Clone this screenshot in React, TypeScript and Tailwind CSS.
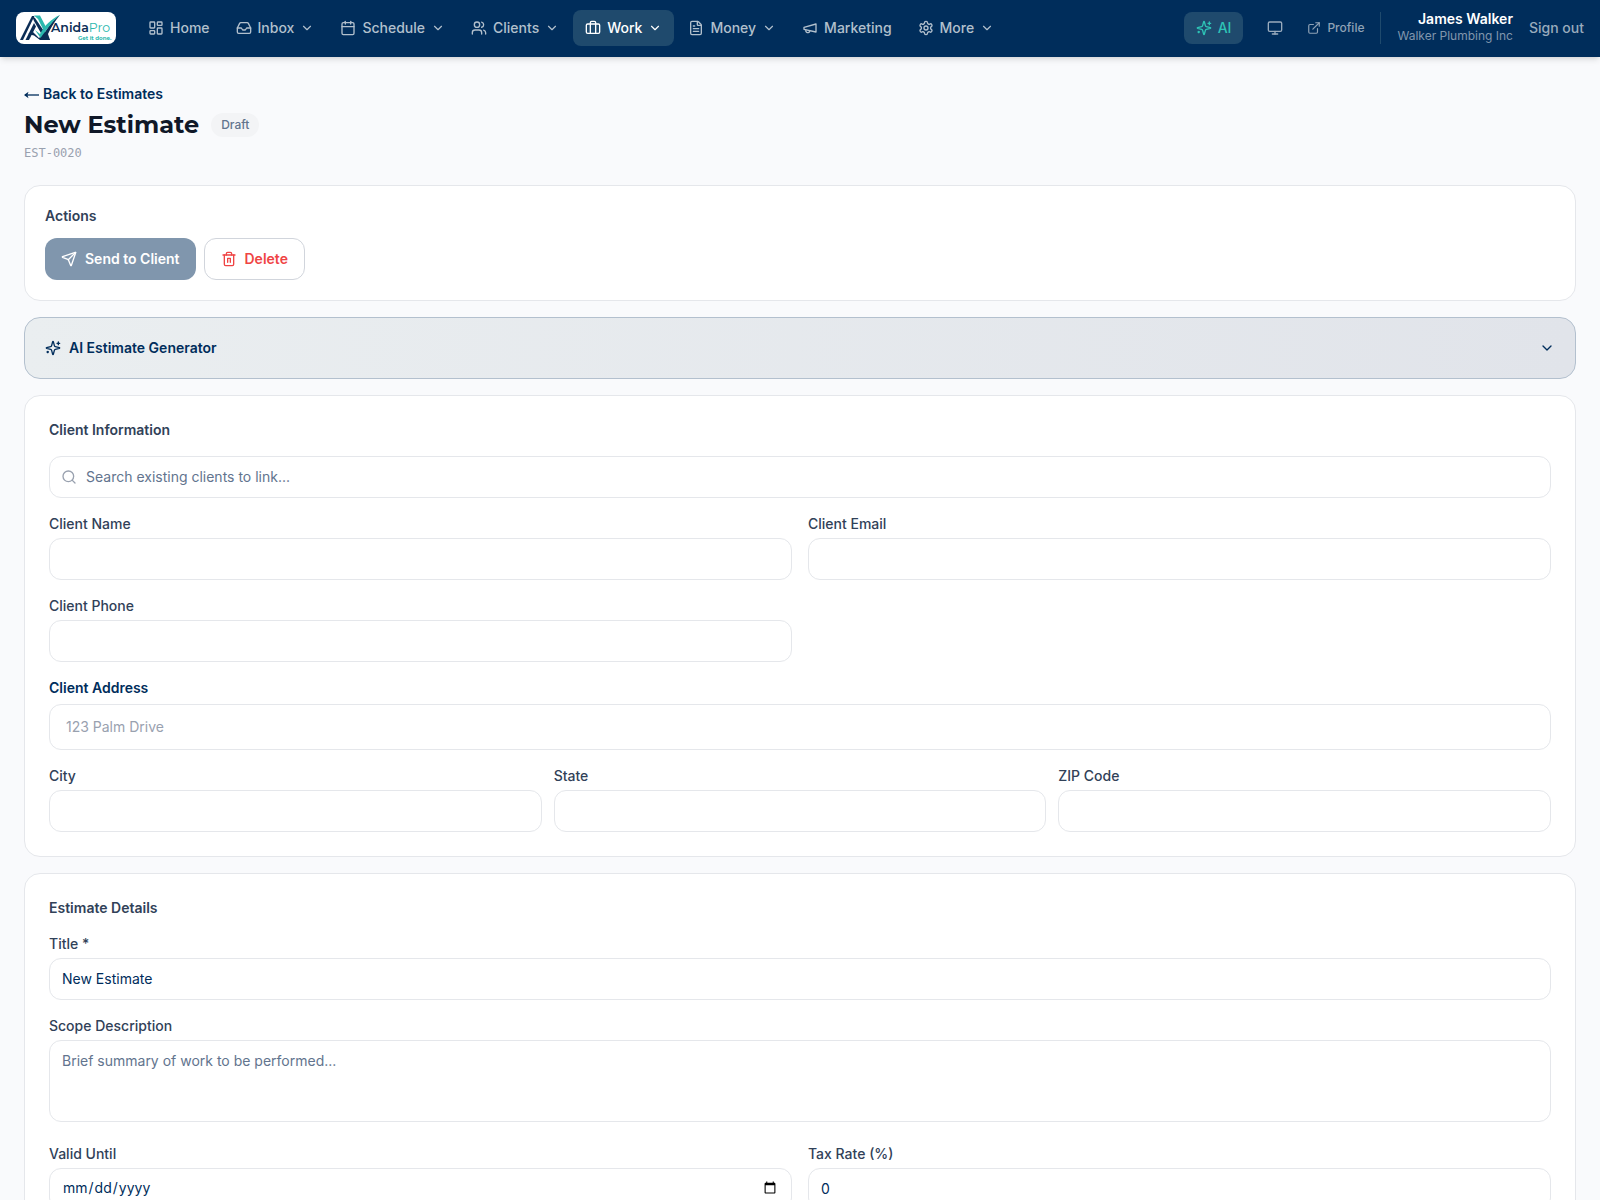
import { useState } from 'react';
import type { InputHTMLAttributes, ReactNode } from 'react';
import {
  Briefcase,
  Calendar,
  ChevronDown,
  ExternalLink,
  FileText,
  Inbox,
  LayoutDashboard,
  Monitor,
  Search,
  Send,
  Users,
} from 'lucide-react';

interface IconProps {
  size?: number;
  strokeWidth?: number;
}

interface NavItem {
  label: string;
  icon: (props: IconProps) => ReactNode;
  menu?: boolean;
  active?: boolean;
}

const StrokeIcon = ({ size = 16, strokeWidth = 2, children }: IconProps & { children: ReactNode }) => (
  <svg
    width={size}
    height={size}
    viewBox="0 0 24 24"
    fill="none"
    stroke="currentColor"
    strokeWidth={strokeWidth}
    strokeLinecap="round"
    strokeLinejoin="round"
    aria-hidden="true"
  >
    {children}
  </svg>
);

const MegaphoneIcon = (props: IconProps) => (
  <StrokeIcon {...props}>
    <path d="m3 11 18-5v12L3 14v-3z" />
    <path d="M11.6 16.8a3 3 0 1 1-5.8-1.6" />
  </StrokeIcon>
);

const GearIcon = (props: IconProps) => (
  <StrokeIcon {...props}>
    <path d="M12.22 2h-.44a2 2 0 0 0-2 2v.18a2 2 0 0 1-1 1.73l-.43.25a2 2 0 0 1-2 0l-.15-.08a2 2 0 0 0-2.73.73l-.22.38a2 2 0 0 0 .73 2.73l.15.1a2 2 0 0 1 1 1.72v.51a2 2 0 0 1-1 1.74l-.15.09a2 2 0 0 0-.73 2.73l.22.38a2 2 0 0 0 2.73.73l.15-.08a2 2 0 0 1 2 0l.43.25a2 2 0 0 1 1 1.73V20a2 2 0 0 0 2 2h.44a2 2 0 0 0 2-2v-.18a2 2 0 0 1 1-1.73l.43-.25a2 2 0 0 1 2 0l.15.08a2 2 0 0 0 2.73-.73l.22-.39a2 2 0 0 0-.73-2.73l-.15-.08a2 2 0 0 1-1-1.74v-.5a2 2 0 0 1 1-1.74l.15-.09a2 2 0 0 0 .73-2.73l-.22-.38a2 2 0 0 0-2.73-.73l-.15.08a2 2 0 0 1-2 0l-.43-.25a2 2 0 0 1-1-1.73V4a2 2 0 0 0-2-2z" />
    <circle cx="12" cy="12" r="3" />
  </StrokeIcon>
);

const SparklesIcon = (props: IconProps) => (
  <StrokeIcon {...props}>
    <path d="M9.937 15.5A2 2 0 0 0 8.5 14.063l-6.135-1.582a.5.5 0 0 1 0-.962L8.5 9.936A2 2 0 0 0 9.937 8.5l1.582-6.135a.5.5 0 0 1 .963 0L14.063 8.5A2 2 0 0 0 15.5 9.937l6.135 1.581a.5.5 0 0 1 0 .964L15.5 14.063a2 2 0 0 0-1.437 1.437l-1.582 6.135a.5.5 0 0 1-.963 0z" />
    <path d="M20 3v4" />
    <path d="M22 5h-4" />
    <path d="M4 17v2" />
    <path d="M5 18H3" />
  </StrokeIcon>
);

const TrashIcon = (props: IconProps) => (
  <StrokeIcon {...props}>
    <path d="M3 6h18" />
    <path d="M19 6v14c0 1-1 2-2 2H7c-1 0-2-1-2-2V6" />
    <path d="M8 6V4c0-1 1-2 2-2h4c1 0 2 1 2 2v2" />
    <path d="M10 17v-6h4v6" />
  </StrokeIcon>
);

const BackArrow = () => (
  <svg viewBox="0 0 15 8" className="mt-0.5 h-2 w-[15px]" aria-hidden="true">
    <path d="M1 4h14" stroke="currentColor" strokeWidth="1.3" />
    <path d="M0 4 L4.5 0.8 L3.4 4 L4.5 7.2 Z" fill="currentColor" />
  </svg>
);

const navItems: NavItem[] = [
  { label: 'Home', icon: (props) => <LayoutDashboard {...props} /> },
  { label: 'Inbox', icon: (props) => <Inbox {...props} />, menu: true },
  { label: 'Schedule', icon: (props) => <Calendar {...props} />, menu: true },
  { label: 'Clients', icon: (props) => <Users {...props} />, menu: true },
  { label: 'Work', icon: (props) => <Briefcase {...props} />, menu: true, active: true },
  { label: 'Money', icon: (props) => <FileText {...props} />, menu: true },
  { label: 'Marketing', icon: MegaphoneIcon },
  { label: 'More', icon: GearIcon, menu: true },
];

const Logo = () => (
  <a href="#home" aria-label="AnidaPro" className="block h-8 w-[100px] shrink-0 overflow-hidden rounded-lg bg-white">
    <svg viewBox="0 0 200 64" className="h-8 w-[100px]">
      <path d="M8 56 L32 8 L37 8 L14 56 Z" fill="#0b2d55" />
      <path d="M19 56 L36 22 L40 29 L26 56 Z" fill="#0b2d55" />
      <path d="M32 8 L38 12 L68 56 L58 56 L36 18 Z" fill="#0b2d55" />
      <path d="M36 7 L48 7 L61 32 L56 38 L44 14 Z" fill="#2bb8ae" />
      <path d="M24 44 L34 40 L46 52 L58 40 C68 24 77 14 88 6 C78 18 70 30 64 44 L68 56 L56 56 L48 56 L36 47 Z" fill="#0b2d55" />
      <path d="M38 36 L48 44 C58 26 70 14 88 6 C74 17 64 32 49 52 Z" fill="#2bb8ae" />
      <text x="70" y="40" fontFamily="Montserrat, Inter, sans-serif" fontSize="25" fontWeight="600" fill="#0b2d55">
        Anida
        <tspan fontWeight="400" fill="#2bb8ae">
          Pro
        </tspan>
      </text>
      <text x="124" y="56" fontFamily="Montserrat, Inter, sans-serif" fontSize="11" fontWeight="700" fill="#2bb8ae">
        Get it done.
      </text>
    </svg>
  </a>
);

const NavButton = ({ label, icon: Icon, menu, active }: NavItem) => (
  <button
    type="button"
    className={`flex h-9 items-center gap-1.5 rounded-lg px-3 text-sm font-medium ${
      active ? 'bg-[#1f4a6d] text-white' : 'text-[#b2c0cd]'
    }`}
  >
    <Icon size={16} strokeWidth={2} />
    {label}
    {menu && <ChevronDown size={14} strokeWidth={2} />}
  </button>
);

const Header = () => (
  <header className="flex h-[57px] items-center justify-between border-b border-[#002d5b] bg-[#002d5b] px-4 shadow-md">
    <div className="flex items-center gap-5">
      <Logo />
      <nav className="flex items-center gap-0.5">
        {navItems.map((item) => (
          <NavButton key={item.label} {...item} />
        ))}
      </nav>
    </div>

    <div className="flex items-center">
      <button
        type="button"
        className="flex h-8 items-center gap-1.5 rounded-lg bg-[#1f4a6d] px-3 text-sm font-medium text-[#2ec4b6]"
      >
        <SparklesIcon size={16} strokeWidth={2} />
        AI
      </button>
      <button type="button" aria-label="Display" className="ml-4 p-2 text-[#99abbd]">
        <Monitor size={16} strokeWidth={2} />
      </button>
      <a href="#profile" className="ml-4 flex items-center gap-1.5 text-xs font-medium text-[#8fa2b6]">
        <ExternalLink size={14} strokeWidth={2} />
        Profile
      </a>
      <div className="ml-4 flex h-8 flex-col justify-center border-l border-[#1f4a6d] pl-4 text-right">
        <span className="mb-0.5 text-sm leading-[14px] font-semibold text-white">James Walker</span>
        <span className="text-xs leading-4 text-[#8096ad]">Walker Plumbing Inc</span>
      </div>
      <button type="button" className="ml-4 text-sm font-medium text-[#99abbd]">
        Sign out
      </button>
    </div>
  </header>
);

const Card = ({ title, children }: { title: string; children: ReactNode }) => (
  <section className="rounded-2xl border border-gray-200 bg-white p-6">
    <h2 className="text-sm leading-5 font-semibold text-slate-700">{title}</h2>
    {children}
  </section>
);

interface FieldProps extends InputHTMLAttributes<HTMLInputElement> {
  id: string;
  label: string;
}

const labelClass = 'mb-1 block text-sm font-medium text-slate-700';
const inputClass =
  'block h-[42px] w-full rounded-xl border border-gray-200 bg-white px-3 pt-2.5 pb-3 text-sm text-[#002d5b] placeholder:text-slate-500';

const Field = ({ id, label, ...props }: FieldProps) => (
  <div>
    <label htmlFor={id} className={labelClass}>
      {label}
    </label>
    <input id={id} className={inputClass} {...props} />
  </div>
);

export default function App() {
  const [title, setTitle] = useState('New Estimate');
  const [taxRate, setTaxRate] = useState('0');

  return (
    <div className="min-h-screen bg-[#f9fafc] font-[Inter,sans-serif]">
      <Header />

      <main className="px-6 pt-[27px] pb-6">
        <a href="#estimates" className="flex items-center gap-1 text-sm leading-5 font-semibold text-[#002d5b]">
          <BackArrow />
          Back to Estimates
        </a>
        <div className="mt-[5px] flex items-center gap-3">
          <h1 className="font-[Montserrat,Inter,sans-serif] text-2xl font-bold text-gray-900">New Estimate</h1>
          <span className="rounded-full bg-gray-100 px-2.5 py-1 text-xs font-medium text-slate-500">Draft</span>
        </div>
        <p className="mt-1 font-['DejaVu_Sans_Mono',monospace] text-xs text-gray-400">EST-0020</p>

        <div className="mt-6 space-y-4">
          <section className="rounded-2xl border border-gray-200 bg-white p-5">
            <h2 className="text-sm font-semibold text-slate-700">Actions</h2>
            <div className="mt-3 flex gap-2">
              <button
                type="button"
                className="flex h-[42px] items-center gap-2 rounded-xl bg-[#8096ad] px-4 text-sm font-semibold text-white"
              >
                <Send size={16} strokeWidth={2} />
                Send to Client
              </button>
              <button
                type="button"
                className="flex h-[42px] items-center gap-2 rounded-xl border border-gray-300 bg-white px-4 text-sm font-semibold text-[#ef4444]"
              >
                <TrashIcon size={16} strokeWidth={2} />
                Delete
              </button>
            </div>
          </section>

          <button
            type="button"
            className="flex h-[62px] w-full items-center justify-between rounded-2xl border border-[#b3c0ce] bg-linear-to-r from-[#eaeef0] to-[#e1e4ea] px-5 text-sm font-semibold text-[#002d5b]"
          >
            <span className="flex items-center gap-2">
              <SparklesIcon size={16} strokeWidth={2} />
              AI Estimate Generator
            </span>
            <ChevronDown size={16} strokeWidth={2} />
          </button>

          <Card title="Client Information">
            <div className="relative mt-4">
              <Search size={16} strokeWidth={2} className="absolute top-[13px] left-3 text-gray-400" />
              <input
                type="text"
                aria-label="Search existing clients"
                placeholder="Search existing clients to link..."
                className={`${inputClass} pl-9`}
              />
            </div>
            <div className="mt-4 grid grid-cols-2 gap-4">
              <Field id="client-name" label="Client Name" />
              <Field id="client-email" label="Client Email" type="email" />
              <Field id="client-phone" label="Client Phone" type="tel" />
            </div>
            <div className="mt-4">
              <label htmlFor="client-address" className="mb-1.5 block text-sm font-semibold text-[#002d5b]">
                Client Address
              </label>
              <input
                id="client-address"
                placeholder="123 Palm Drive"
                className="block h-[46px] w-full rounded-xl border border-gray-200 bg-white px-4 pt-2.5 pb-3 text-sm placeholder:text-gray-400"
              />
            </div>
            <div className="mt-4 grid grid-cols-3 gap-3">
              <Field id="city" label="City" />
              <Field id="state" label="State" />
              <Field id="zip" label="ZIP Code" />
            </div>
          </Card>

          <Card title="Estimate Details">
            <div className="mt-4 space-y-4">
              <Field id="title" label="Title *" value={title} onChange={(e) => setTitle(e.target.value)} />
              <div>
                <label htmlFor="scope" className={labelClass}>
                  Scope Description
                </label>
                <textarea
                  id="scope"
                  rows={3}
                  placeholder="Brief summary of work to be performed..."
                  className="block h-[82px] w-full resize-none rounded-xl border border-gray-200 bg-white px-3 py-2.5 text-sm text-[#002d5b] placeholder:text-slate-500"
                />
              </div>
              <div className="grid grid-cols-2 gap-4 pt-1.5">
                <Field id="valid-until" label="Valid Until" type="date" />
                <Field
                  id="tax-rate"
                  label="Tax Rate (%)"
                  type="number"
                  value={taxRate}
                  onChange={(e) => setTaxRate(e.target.value)}
                />
              </div>
            </div>
          </Card>
        </div>
      </main>
    </div>
  );
}
